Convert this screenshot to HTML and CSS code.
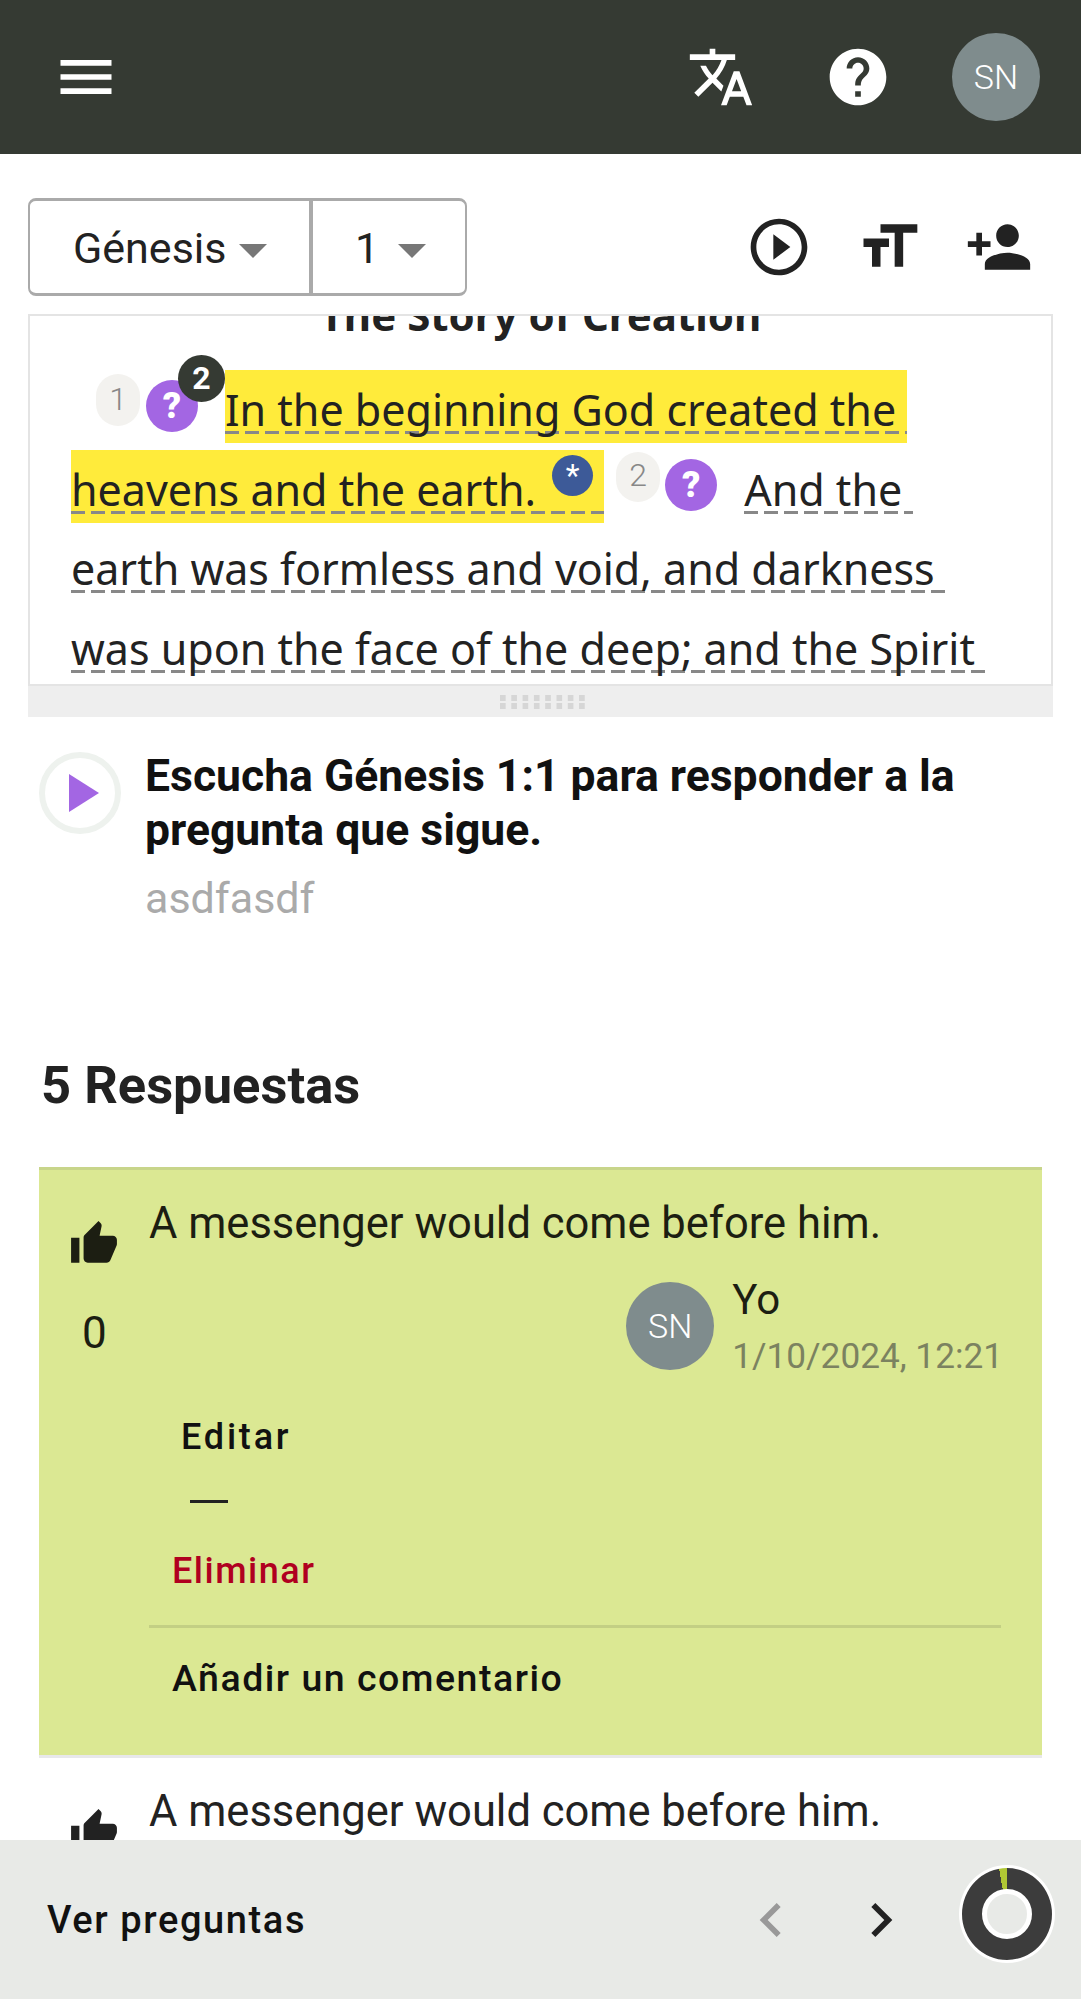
FILE: index.html
```html
<!doctype html>
<html>
<head>
<meta charset="utf-8">
<title>Génesis 1</title>
<link rel="stylesheet" href="styles.css">
</head>
<body>
<header class="topbar">
	<svg class="icon menu-icon" viewBox="0 0 24 24"><path d="M3 18h18v-2H3v2zm0-5h18v-2H3v2zm0-7v2h18V6H3z"/></svg>
	<svg class="icon translate-icon" viewBox="0 0 24 24"><path d="M12.87 15.07l-2.54-2.51.03-.03c1.74-1.94 2.98-4.17 3.71-6.53H17V4h-7V2H8v2H1v1.99h11.17C11.5 7.92 10.44 9.75 9 11.35 8.07 10.32 7.3 9.19 6.69 8h-2c.73 1.63 1.73 3.17 2.98 4.56l-5.09 5.02L4 19l5-5 3.11 3.11.76-2.04zM18.5 10h-2L12 22h2l1.12-3h4.75L21 22h2l-4.5-12zm-2.62 7l1.62-4.33L19.12 17h-3.24z"/></svg>
	<svg class="icon help-icon" viewBox="0 0 24 24"><path d="M12 2C6.48 2 2 6.48 2 12s4.48 10 10 10 10-4.48 10-10S17.52 2 12 2zm1 17h-2v-2h2v2zm2.07-7.75l-.9.92C13.45 12.9 13 13.5 13 15h-2v-.5c0-1.1.45-2.1 1.17-2.83l1.24-1.26c.37-.36.59-.86.59-1.41 0-1.1-.9-2-2-2s-2 .9-2 2H8c0-2.21 1.79-4 4-4s4 1.79 4 4c0 .88-.36 1.68-.93 2.25z"/></svg>
	<div class="avatar">SN</div>
</header>

<div class="toolbar">
	<div class="picker">
		<div class="picker-btn book-btn">Génesis<span class="caret"></span></div>
		<div class="picker-btn chapter-btn">1<span class="caret"></span></div>
	</div>
	<div class="tools">
		<svg class="icon" viewBox="0 0 24 24"><path d="M10 16.5l6-4.5-6-4.5v9zM12 2C6.48 2 2 6.48 2 12s4.48 10 10 10 10-4.48 10-10S17.52 2 12 2zm0 18c-4.41 0-8-3.59-8-8s3.59-8 8-8 8 3.59 8 8-3.59 8-8 8z"/></svg>
		<svg class="icon" viewBox="0 0 24 24"><path d="M9 4v3h5v12h3V7h5V4H9zm-6 8h3v7h3v-7h3V9H3v3z"/></svg>
		<svg class="icon" viewBox="0 0 24 24"><path d="M15 12c2.21 0 4-1.79 4-4s-1.79-4-4-4-4 1.79-4 4 1.79 4 4 4zm-9-2V7H4v3H1v2h3v3h2v-3h3v-2H6zm9 4c-2.67 0-8 1.34-8 4v2h16v-2c0-2.66-5.33-4-8-4z"/></svg>
	</div>
</div>

<section class="scripture">
	<h2 class="chapter-title">The Story of Creation</h2>
	<p class="verses">
		<span class="verse-num first">1</span><span class="q-badge"><span class="q-mark">?</span><span class="count">2</span></span><span class="hl"><span class="dash">In the beginning God created the&nbsp;</span></span><br>
		<span class="hl"><span class="dash">heavens and the earth. <span class="note">*</span></span></span><span class="verse-num second">2</span><span class="q-badge second"><span class="q-mark">?</span></span><span class="dash and">And the&nbsp;</span><br>
		<span class="dash">earth was formless and void, and darkness&nbsp;</span><br>
		<span class="dash">was upon the face of the deep; and the Spirit&nbsp;</span>
	</p>
</section>
<div class="resize-bar"><span class="grip"></span></div>

<section class="question">
	<div class="play-ring"><span class="play-tri"></span></div>
	<div class="question-text">
		<h3>Escucha Génesis 1:1 para responder a la pregunta que sigue.</h3>
		<p>asdfasdf</p>
	</div>
</section>

<h2 class="answers-title">5 Respuestas</h2>

<div class="answer mine">
	<div class="vote">
		<svg class="icon thumb" viewBox="0 0 24 24"><path d="M1 21h4V9H1v12zm22-11c0-1.1-.9-2-2-2h-6.31l.95-4.57.03-.32c0-.41-.17-.79-.44-1.06L14.17 1 7.59 7.59C7.22 7.95 7 8.45 7 9v10c0 1.1.9 2 2 2h9c.83 0 1.54-.5 1.84-1.22l3.02-7.05c.09-.23.14-.47.14-.73v-2z"/></svg>
		<div class="vote-count">0</div>
	</div>
	<div class="answer-body">
		<p class="answer-text">A messenger would come before him.</p>
		<div class="byline">
			<div class="avatar">SN</div>
			<div>
				<div class="who">Yo</div>
				<div class="when">1/10/2024, 12:21</div>
			</div>
		</div>
		<div class="action edit">Editar</div>
		<div class="action-sep"></div>
		<div class="action del">Eliminar</div>
		<div class="add-comment">Añadir un comentario</div>
	</div>
</div>

<div class="answer">
	<div class="vote">
		<svg class="icon thumb" viewBox="0 0 24 24"><path d="M1 21h4V9H1v12zm22-11c0-1.1-.9-2-2-2h-6.31l.95-4.57.03-.32c0-.41-.17-.79-.44-1.06L14.17 1 7.59 7.59C7.22 7.95 7 8.45 7 9v10c0 1.1.9 2 2 2h9c.83 0 1.54-.5 1.84-1.22l3.02-7.05c.09-.23.14-.47.14-.73v-2z"/></svg>
	</div>
	<div class="answer-body">
		<p class="answer-text">A messenger would come before him.</p>
	</div>
</div>

<footer class="bottombar">
	<div class="see-questions">Ver preguntas</div>
	<svg class="icon prev" viewBox="0 0 24 24"><path d="M15.41 7.41L14 6l-6 6 6 6 1.41-1.41L10.83 12z"/></svg>
	<svg class="icon next" viewBox="0 0 24 24"><path d="M10 6L8.59 7.41 13.17 12l-4.58 4.59L10 18l6-6z"/></svg>
	<div class="progress"><span class="progress-hole"></span></div>
</footer>
</body>
</html>
```

FILE: styles.css
```css
*{margin:0;padding:0;box-sizing:border-box;}
html,body{height:1999px;overflow:hidden;}
body{position:relative;background:#fff;color:#222;font-family:Roboto,"Liberation Sans",sans-serif;}
.icon{display:block;width:68px;height:68px;fill:#222;flex:none;}

.topbar{display:flex;align-items:center;height:154px;padding:0 41px 0 52px;background:#353a33;}
.topbar .icon{fill:#fff;}
.translate-icon{margin-left:auto;}
.help-icon{margin-left:69px;margin-right:60px;}
.avatar{display:flex;align-items:center;justify-content:center;flex:none;width:88px;height:88px;border-radius:50%;background:#7f8c8d;color:#fff;font-size:34px;font-weight:300;}

.toolbar{display:flex;justify-content:space-between;align-items:center;height:98px;margin-top:44px;padding:0 48px 0 28px;}
.picker{display:flex;height:98px;border:2px solid #aaa;border-top-width:3px;border-bottom-width:3px;border-radius:8px;}
.picker-btn{display:flex;align-items:center;font-size:43px;color:#222;padding-top:2px;}
.book-btn{width:283px;padding-left:43px;border-right:4px solid #aaa;}
.chapter-btn{width:152px;padding-left:42px;}
.caret{width:0;height:0;margin-left:13px;margin-top:6px;border-left:14px solid transparent;border-right:14px solid transparent;border-top:14px solid #777;}
.chapter-btn .caret{margin-left:19px;}
.tools{display:flex;gap:42px;}

.scripture{height:372px;margin:18px 28px 0;border:2px solid #e4e4e4;overflow:hidden;font-family:"Noto Sans",sans-serif;}
.chapter-title{margin-top:-37px;height:91px;font-size:42px;line-height:72px;font-weight:700;text-align:center;}
.verses{padding-left:41px;font-size:43px;line-height:79.6px;white-space:nowrap;}
.dash{background:repeating-linear-gradient(90deg,#888 0 14px,transparent 14px 20px) left bottom 5px/100% 3px no-repeat;}
.hl{background:#ffeb3b;padding:10px 0 4px;}
.verse-num{display:inline-block;width:44px;height:52px;border-radius:22px;background:#f3f2ef;color:#888;font-family:Roboto,sans-serif;font-size:32px;font-weight:300;line-height:50px;text-align:center;vertical-align:16px;}
.verse-num.first{margin-left:25px;}
.verse-num.second{height:50px;margin-left:12px;vertical-align:20px;line-height:46px;}
.q-badge{position:relative;display:inline-block;width:52px;height:52px;margin-left:6px;margin-right:27px;vertical-align:8px;}
.q-badge.second{margin-left:5px;vertical-align:9px;}
.q-mark{display:block;width:52px;height:52px;border-radius:50%;background:#a366e3;color:#fff;font-family:Roboto,sans-serif;font-size:36px;font-weight:900;line-height:52px;text-align:center;}
.count{position:absolute;left:32px;top:-25px;width:47px;height:47px;border-radius:50%;background:#353a33;color:#fff;font-family:Roboto,sans-serif;font-size:32px;font-weight:700;line-height:47px;text-align:center;}
.note{display:inline-block;width:41px;height:41px;margin-left:5px;margin-right:11px;border-radius:50%;background:#3d5a98;color:#fff;font-family:Roboto,sans-serif;font-size:32px;line-height:41px;text-align:center;vertical-align:20px;}
.resize-bar{display:flex;align-items:center;justify-content:center;height:31px;margin:0 28px;background:#eee;}
.grip{width:85px;height:14px;margin-left:4px;background:linear-gradient(90deg,#d6d6d6 6px,transparent 6px) 0 0/11.3px 6px repeat-x,linear-gradient(90deg,#d6d6d6 6px,transparent 6px) 0 8px/11.3px 6px repeat-x;}

.question{display:flex;margin-top:35px;padding-left:39px;}
.play-ring{display:flex;align-items:center;justify-content:center;flex:none;width:82px;height:82px;border:6px solid #eef2ee;border-radius:50%;}
.play-tri{margin-left:8px;border-left:30px solid #a366e3;border-top:19px solid transparent;border-bottom:19px solid transparent;}
.question-text{margin-top:-3px;margin-left:24px;width:850px;}
.question-text h3{font-size:44.5px;line-height:54px;font-weight:700;color:#111;}
.question-text p{margin-top:14px;font-size:43px;line-height:54px;color:#aaa;}

.answers-title{margin-top:128px;padding-left:41px;font-size:52.5px;line-height:64px;font-weight:700;}

.answer{display:flex;margin:50px 39px 0;padding:27px 41px 0 0;}
.answer.mine{height:588px;background:#dbe893;border-top:3px solid #c8d58a;box-shadow:0 3px 0 #e8e8ea;color:#1c1e12;}
.answer.mine+.answer{margin-top:3px;padding-top:27px;}
.vote{flex:none;width:110px;padding-left:30px;}
.thumb{width:50px;height:50px;margin-top:22px;fill:currentColor;}
.answer .thumb{color:#222;}
.answer.mine .thumb{color:#1c1e12;}
.vote-count{margin-top:38px;padding-left:13px;font-size:44px;line-height:52px;}
.answer-body{flex:1;}
.answer-text{font-size:43.5px;line-height:54px;}
.byline{display:flex;justify-content:flex-end;gap:18px;margin-top:31px;margin-right:-2px;}
.who{font-size:42px;line-height:50px;margin-top:-7px;}
.when{margin-top:9px;font-size:35.2px;line-height:44px;color:#7b8260;}
.action{font-size:36px;font-weight:500;line-height:48px;letter-spacing:1.5px;}
.edit{margin-top:35px;padding-left:32px;color:#111;letter-spacing:2.8px;}
.action-sep{width:38px;height:3px;margin:39px 0 0 41px;background:#222;}
.del{margin-top:44px;padding-left:23px;color:#b00020;}
.add-comment{margin-top:30px;padding:26px 0 0 23px;border-top:3px solid #c3cf84;font-size:37.5px;font-weight:500;line-height:48px;letter-spacing:1.5px;color:#111;}

.bottombar{position:absolute;left:0;right:0;bottom:0;display:flex;align-items:center;height:159px;padding:0 26px 0 47px;background:#e8eae7;}
.see-questions{font-size:38px;font-weight:500;letter-spacing:1.6px;color:#111;}
.prev{margin-left:auto;fill:#999;}
.next{margin-left:42px;}
.progress{position:relative;display:flex;align-items:center;justify-content:center;width:96px;height:98px;margin:0 0 12px 44px;border:3px solid #fff;border-radius:50%;background:conic-gradient(#3c3c3c 0 350deg,#b0c734 350deg 360deg);}
.progress-hole{width:50px;height:50px;border-radius:50%;background:#e8eae7;border:5px solid #fff;}
```
